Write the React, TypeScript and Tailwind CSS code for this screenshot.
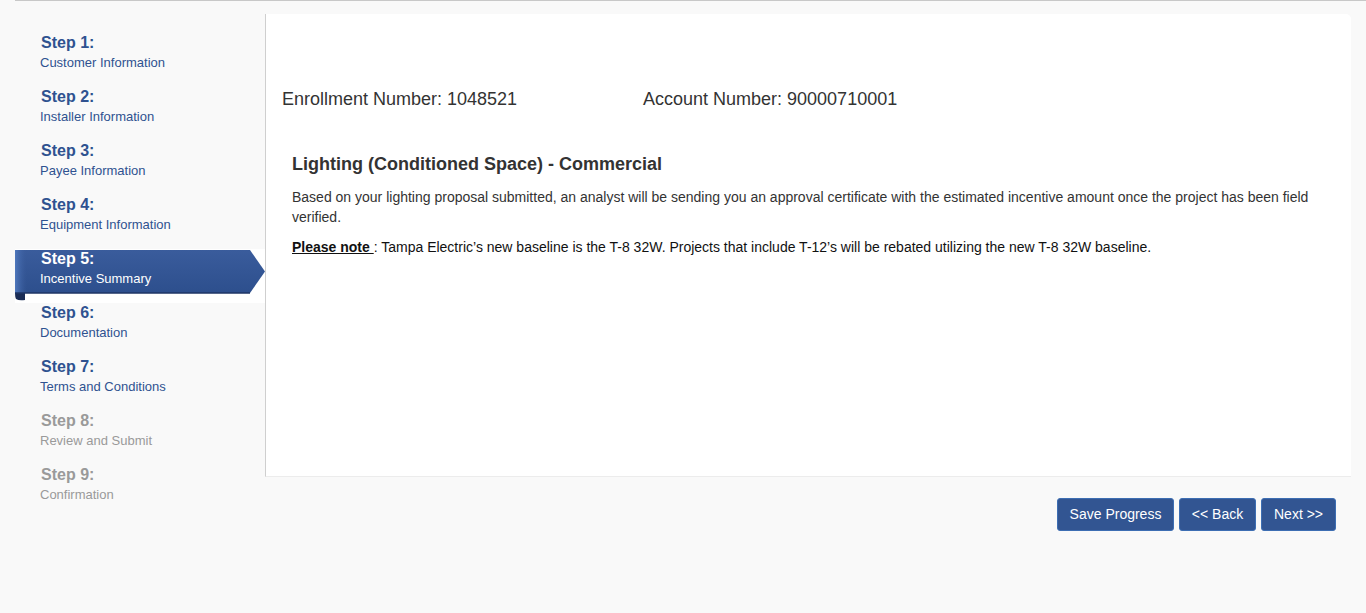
import React from "react";

type Step = { n: number; label: string; state: "done" | "active" | "todo" };

const steps: Step[] = [
  { n: 1, label: "Customer Information", state: "done" },
  { n: 2, label: "Installer Information", state: "done" },
  { n: 3, label: "Payee Information", state: "done" },
  { n: 4, label: "Equipment Information", state: "done" },
  { n: 5, label: "Incentive Summary", state: "active" },
  { n: 6, label: "Documentation", state: "done" },
  { n: 7, label: "Terms and Conditions", state: "done" },
  { n: 8, label: "Review and Submit", state: "todo" },
  { n: 9, label: "Confirmation", state: "todo" },
];

const Ribbon = () => (
  <svg
    className="absolute left-0 top-[1px]"
    width="250"
    height="52"
    viewBox="0 0 250 52"
  >
    <defs>
      <linearGradient id="rib" x1="0" y1="0" x2="0" y2="1">
        <stop offset="0" stopColor="#3a5c9c" />
        <stop offset="1" stopColor="#2d4f8d" />
      </linearGradient>
      <linearGradient id="ribl" x1="0" y1="0" x2="1" y2="0">
        <stop offset="0" stopColor="#4f78bd" />
        <stop offset="1" stopColor="#3a5c9c" stopOpacity="0" />
      </linearGradient>
    </defs>
    {/* curl */}
    <path d="M0 43 L10 43 L10 50 Q4 51 1 49 Q0 47 0 43 Z" fill="#1a2c55" />
    <path d="M0 0 H235 L250 21.5 L235 43 H0 Z" fill="url(#rib)" />
    <rect x="0" y="0" width="12" height="43" fill="url(#ribl)" />
    <path d="M0 43 H235" stroke="#1e3565" strokeWidth="1.5" />
  </svg>
);

const StepItem = ({ step }: { step: Step }) => {
  const active = step.state === "active";
  const color =
    step.state === "todo"
      ? "text-[#9a9a9a]"
      : active
      ? "text-white"
      : "text-[#2f5290]";
  return (
    <div className={`relative h-[54px] ${active ? "bg-white" : ""}`}>
      {active && <Ribbon />}
      <div className={`relative pl-[26px] ${color}`}>
        <div className="text-[16px] font-bold leading-[20px]">
          Step {step.n}:
        </div>
        <div className="-ml-[1px] text-[13px] leading-[20px]">
          {step.label}
        </div>
      </div>
    </div>
  );
};

export default function App() {
  return (
    <div
      className="min-h-[613px] bg-[#f9f9f9] text-[#333]"
      style={{ fontFamily: '"Liberation Sans", Arial, sans-serif' }}
    >
      <div className="ml-[15px] h-[1px] bg-[#c8c8c8]" />
      <div className="flex pl-[15px] pr-[15px] pt-[13px]">
        {/* sidebar */}
        <aside className="w-[250px] shrink-0 pt-[19px]">
          {steps.map((s) => (
            <StepItem key={s.n} step={s} />
          ))}
        </aside>

        {/* main */}
        <div className="flex-1">
          <section className="h-[463px] rounded-tr-[5px] border-l border-[#cfcfcf] border-b border-b-[#ececec] bg-white">
            <div className="flex pl-[16px] pt-[74px] text-[18px] leading-[22px] text-[#333]">
              <div className="w-[361px]">Enrollment Number: 1048521</div>
              <div>Account Number: 90000710001</div>
            </div>
            <div className="pl-[26px] pr-[20px] pt-[43px]">
              <h2 className="text-[18px] font-bold leading-[22px] text-[#333]">
                Lighting (Conditioned Space) - Commercial
              </h2>
              <p className="mt-[12px] text-[14px] leading-[20px] text-[#333]">
                Based on your lighting proposal submitted, an analyst will be
                sending you an approval certificate with the estimated
                incentive amount once the project has been field verified.
              </p>
              <p className="mt-[10px] text-[14px] leading-[20px] text-[#111]">
                <span className="font-bold underline">Please note </span>:
                Tampa Electric’s new baseline is the T-8 32W. Projects that
                include T-12’s will be rebated utilizing the new T-8 32W
                baseline.
              </p>
            </div>
          </section>

          <div className="flex justify-end gap-[5px] pr-[15px] pt-[21px]">
            <button className="h-[33px] w-[117px] rounded-[3px] border border-[#3d6eb3] bg-[#325592] text-[14px] text-white">
              Save Progress
            </button>
            <button className="h-[33px] w-[77px] rounded-[3px] border border-[#3d6eb3] bg-[#325592] text-[14px] text-white">
              &lt;&lt; Back
            </button>
            <button className="h-[33px] w-[75px] rounded-[3px] border border-[#3d6eb3] bg-[#325592] text-[14px] text-white">
              Next &gt;&gt;
            </button>
          </div>
        </div>
      </div>
    </div>
  );
}
